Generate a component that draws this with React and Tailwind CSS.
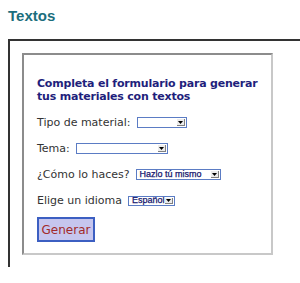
function FakeSelect({ width, height = 11, value }) {
    return (
        <span
            className="ml-[6px] flex items-stretch border border-[#5b7cc4] bg-white"
            style={{ width, height }}
        >
            <span className="flex flex-1 items-center overflow-hidden whitespace-nowrap pl-[3px] font-['Liberation_Sans',Arial,sans-serif] text-[9px] leading-none text-[#15156e] [-webkit-text-stroke:0.25px_#15156e]">
                {value}
            </span>

            <span className="my-[1px] mr-[1px] flex w-[8px] shrink-0 items-center justify-center border-b border-r border-[#808080] bg-[#ececec]">
                <svg width="5" height="3" viewBox="0 0 5 3">
                    <path d="M0 0H5L2.5 3Z" fill="#000" />
                </svg>
            </span>
        </span>
    );
}

const rows = [
    { label: "Tipo de material:", width: 50 },
    { label: "Tema:", width: 92 },
    { label: "¿Cómo lo haces?", width: 85, value: "Hazlo tú mismo" },
    { label: "Elige un idioma", width: 47, height: 10, value: "Español" },
];

function App() {
    return (
        <div className="h-[283px] overflow-hidden bg-white font-['DejaVu_Sans',Verdana,sans-serif]">
            <h1 className="pl-2 pt-[7px] font-['Liberation_Sans',Arial,sans-serif] text-[15px] font-bold leading-[18px] text-[#1b6e7d]">
                Textos
            </h1>

            <div className="ml-2 mt-[14px] w-[340px] border-l-2 border-t-2 border-[#333333] p-3">
                <div className="h-[202px] w-[251px] border-2 border-b-[#c8c8c8] border-l-[#8c8c8c] border-r-[#c8c8c8] border-t-[#8c8c8c] pl-[13px] pr-[4px] pt-[22px]">
                    <p className="text-[11px] font-bold leading-[13px] tracking-[-0.2px] text-[#1f1f7c]">
                        Completa el formulario para generar tus materiales con textos
                    </p>

                    {rows.map((row) => (
                        <div
                            key={row.label}
                            className="mt-[13px] flex h-[13px] items-center text-[11px] leading-[13px] text-[#333333]"
                        >
                            <span className="whitespace-nowrap">
                                {row.label}
                            </span>

                            <FakeSelect
                                width={row.width}
                                height={row.height}
                                value={row.value}
                            />
                        </div>
                    ))}

                    <button
                        type="button"
                        className="mt-[10px] h-[25px] w-[58px] border-2 border-[#3c5fc2] bg-[#c6c6ee] text-[12px] leading-none text-[#a22a2a]"
                    >
                        Generar
                    </button>
                </div>
            </div>
        </div>
    );
}

export default App;
